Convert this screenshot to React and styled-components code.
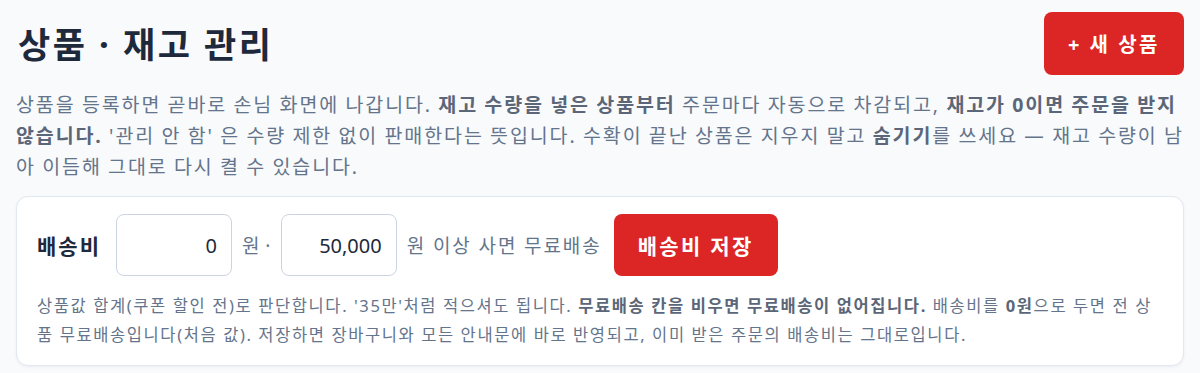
import React from "react";
import styled, { createGlobalStyle } from "styled-components";

const GlobalStyle = createGlobalStyle`
  html, body {
    margin: 0;
    padding: 0;
    background: #f8fafc;
  }
  body {
    font-family: "Noto Sans", "Noto Sans CJK KR", sans-serif;
    color: #1e293b;
  }
`;

const Page = styled.div`
  padding: 12px 16px 8px 16px;
`;

const Header = styled.div`
  display: flex;
  justify-content: space-between;
  align-items: center;
`;

const Title = styled.h1`
  margin: 0 0 2px 0;
  padding-left: 2px;
  font-size: 35px;
  font-weight: 700;
  color: #1e293b;
  letter-spacing: 2.5px;
`;

const RedButton = styled.button`
  background: #dc2626;
  color: #fff;
  border: none;
  border-radius: 8px;
  font-family: inherit;
  font-weight: 700;
  font-size: ${(p) => p.$size || 20}px;
  height: ${(p) => p.$height || 64}px;
  padding: 0 ${(p) => p.$padX || 24}px;
  letter-spacing: ${(p) => p.$ls || 2}px;
  white-space: nowrap;
  cursor: pointer;
`;

const Intro = styled.p`
  margin: 14px 0 14px 0;
  font-size: 19.5px;
  line-height: 31px;
  letter-spacing: 1.9px;
  word-spacing: -0.6px;
  color: #64748b;

  b {
    font-weight: 700;
    color: #5b6678;
  }
`;

const Card = styled.div`
  background: #fff;
  border: 1px solid #e2e8f0;
  border-radius: 12px;
  box-shadow: 0 1px 3px rgba(15, 23, 42, 0.06);
  padding: 17px 20px 16px 20px;
`;

const Row = styled.div`
  display: flex;
  align-items: center;
  gap: 10px;
`;

const Label = styled.span`
  font-size: 21px;
  font-weight: 700;
  color: #1e293b;
  letter-spacing: 2px;
  margin-right: 5px;
`;

const Amount = styled.input`
  box-sizing: border-box;
  width: 116px;
  height: 62px;
  border: 1px solid #cbd5e1;
  border-radius: 8px;
  background: #fff;
  padding: 0 14px;
  text-align: right;
  font-family: inherit;
  font-size: 20px;
  color: #1e293b;
`;

const Unit = styled.span`
  font-size: 19px;
  letter-spacing: ${(p) => p.$ls ?? 1.9}px;
  margin-right: ${(p) => p.$gapAfter ?? 0}px;
  color: #64748b;
`;

const Note = styled.p`
  margin: 15px 0 0 0;
  font-size: 16.5px;
  line-height: 29px;
  letter-spacing: 1.6px;
  color: #64748b;

  b {
    font-weight: 700;
    color: #5b6678;
  }
`;

export default function App() {
  return (
    <>
      <GlobalStyle />
      <Page>
        <Header>
          <Title>상품 · 재고 관리</Title>
          <RedButton $size={20} $height={63} $padX={24} $ls={2.5}>+ 새 상품</RedButton>
        </Header>
        <Intro>
          상품을 등록하면 곧바로 손님 화면에 나갑니다. <b>재고 수량을 넣은 상품부터</b> 주문마다 자동으로 차감되고,{" "}
          <b>재고가 0이면 주문을 받지 않습니다.</b> '관리 안 함' 은 수량 제한 없이 판매한다는 뜻입니다. 수확이 끝난 상품은
          지우지 말고 <b>숨기기</b>를 쓰세요 — 재고 수량이 남아 이듬해 그대로 다시 켤 수 있습니다.
        </Intro>
        <Card>
          <Row>
            <Label>배송비</Label>
            <Amount defaultValue="0" />
            <Unit $ls={0.4}>원 ·</Unit>
            <Amount defaultValue="50,000" />
            <Unit $gapAfter={2}>원 이상 사면 무료배송</Unit>
            <RedButton $size={21} $height={62} $padX={24} $ls={2.3}>배송비 저장</RedButton>
          </Row>
          <Note>
            상품값 합계(쿠폰 할인 전)로 판단합니다. '35만'처럼 적으셔도 됩니다. <b>무료배송 칸을 비우면 무료배송이 없어집니다.</b>{" "}
            배송비를 <b>0원</b>으로 두면 전 상품 무료배송입니다(처음 값). 저장하면 장바구니와 모든 안내문에 바로 반영되고, 이미
            받은 주문의 배송비는 그대로입니다.
          </Note>
        </Card>
      </Page>
    </>
  );
}
